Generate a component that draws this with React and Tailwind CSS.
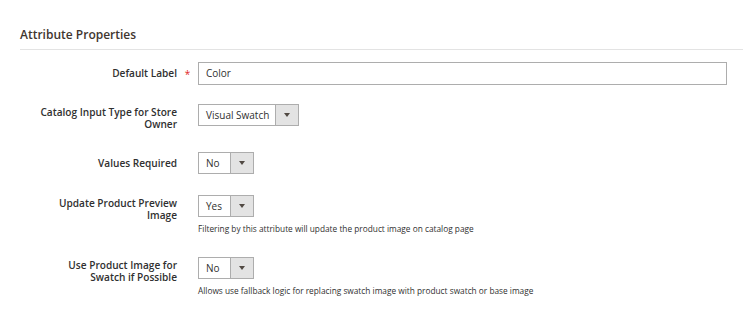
import React from 'react';

const font = { fontFamily: '"Open Sans", "Liberation Sans", sans-serif' };

function Select({ value, width }) {
  return (
    <div className={`flex h-[22px] border border-[#adadad] bg-white ${width}`}>
      <div className="flex-1 flex items-center pl-[7px] text-[10px] text-[#303030]">{value}</div>
      <div className="w-[23px] flex items-center justify-center bg-[#e3e3e3] border-l border-[#adadad]">
        <svg width="6" height="4" viewBox="0 0 6 4">
          <path d="M0 0 L6 0 L3 4 Z" fill="#514943" />
        </svg>
      </div>
    </div>
  );
}

function Row({ label, required, children, note, single, className = '' }) {
  return (
    <div className={`flex ${className}`}>
      <div className="w-[157px] shrink-0 flex justify-end">
        <div className={`w-[138px] text-right text-[10.1px] leading-[12px] font-semibold text-[#303030] ${single ? 'pt-[5px]' : 'pt-[2px]'}`}>{label}</div>
      </div>
      <div className="w-[21px] shrink-0 flex justify-center pt-[6px]">
        {required && <span className="text-[#e22626] text-[10px] leading-[12px]">*</span>}
      </div>
      <div className="flex-1">
        {children}
        {note && <div className="mt-[7px] text-[8.3px] leading-[10px] text-[#303030]">{note}</div>}
      </div>
    </div>
  );
}

export default function App() {
  return (
    <div className="w-[745px] h-[320px] bg-white overflow-hidden" style={font}>
      <div className="pl-[20px] pr-[2px]">
        <h2 className="pt-[27px] pb-[6px] text-[12px] leading-[16px] font-semibold text-[#41362f] border-b border-[#e3e3e3]">
          Attribute Properties
        </h2>
        <div className="pr-[16px]">
          <Row label="Default Label" required single className="mt-[12px]">
            <div className="h-[23px] border border-[#adadad] bg-white flex items-center pl-[7px] text-[10px] text-[#303030]">Color</div>
          </Row>
          <Row label="Catalog Input Type for Store Owner" className="mt-[19px]">
            <Select value="Visual Swatch" width="w-[101px]" />
          </Row>
          <Row label="Values Required" single className="mt-[22px]">
            <Select value="No" width="w-[56px]" />
          </Row>
          <Row label="Update Product Preview Image" note="Filtering by this attribute will update the product image on catalog page" className="mt-[21px]">
            <Select value="Yes" width="w-[56px]" />
          </Row>
          <Row label="Use Product Image for Swatch if Possible" note="Allows use fallback logic for replacing swatch image with product swatch or base image" className="mt-[23px]">
            <Select value="No" width="w-[56px]" />
          </Row>
        </div>
      </div>
    </div>
  );
}
